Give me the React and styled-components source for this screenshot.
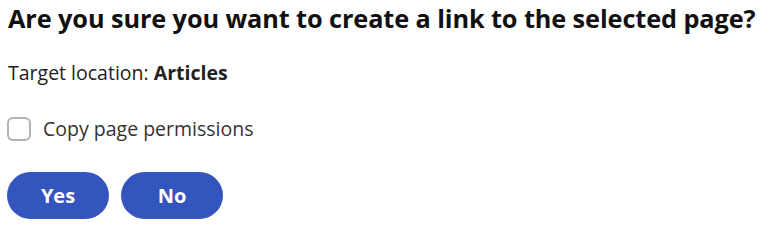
import React, { useState } from 'react'
import styled, { createGlobalStyle } from 'styled-components'

const GlobalStyle = createGlobalStyle`
  body {
    margin: 0;
    background: #ffffff;
    font-family: 'Open Sans', 'Noto Sans', sans-serif;
    color: #1b1b1b;
  }
`

const Dialog = styled.div`
  display: flex;
  flex-direction: column;
  padding: 0 8px;
`

const Title = styled.h2`
  margin: 2px 0 0;
  font-size: 25.3px;
  line-height: 32px;
  font-weight: 700;
  letter-spacing: -0.1px;
  color: #111111;
  white-space: nowrap;
`

const Info = styled.p`
  margin: 26px 0 0;
  font-size: 19.5px;
  line-height: 26px;
  color: #222222;

  strong {
    font-weight: 700;
  }
`

const CheckRow = styled.label`
  display: flex;
  align-items: center;
  gap: 12px;
  margin-top: 30px;
  margin-left: -1px;
  font-size: 19.5px;
  line-height: 26px;
  color: #333333;
  cursor: pointer;
`

const Box = styled.span`
  width: 20px;
  height: 20px;
  border: 2px solid #b3b3b3;
  border-radius: 6px;
  background: ${props => (props.checked ? '#3455bd' : '#ffffff')};
`

const Actions = styled.div`
  display: flex;
  gap: 12px;
  margin-top: 30px;
  margin-left: -1px;
`

const Button = styled.button`
  width: 102px;
  height: 47px;
  border: none;
  border-radius: 24px;
  background: #3455bd;
  color: #ffffff;
  font-family: inherit;
  font-size: 20px;
  font-weight: 700;
  cursor: pointer;
`

export default function App() {
  const [copy, setCopy] = useState(false)
  return (
    <>
      <GlobalStyle />
      <Dialog>
        <Title>Are you sure you want to create a link to the selected page?</Title>
        <Info>
          Target location: <strong>Articles</strong>
        </Info>
        <CheckRow onClick={() => setCopy(!copy)}>
          <Box checked={copy} />
          Copy page permissions
        </CheckRow>
        <Actions>
          <Button>Yes</Button>
          <Button>No</Button>
        </Actions>
      </Dialog>
    </>
  )
}
